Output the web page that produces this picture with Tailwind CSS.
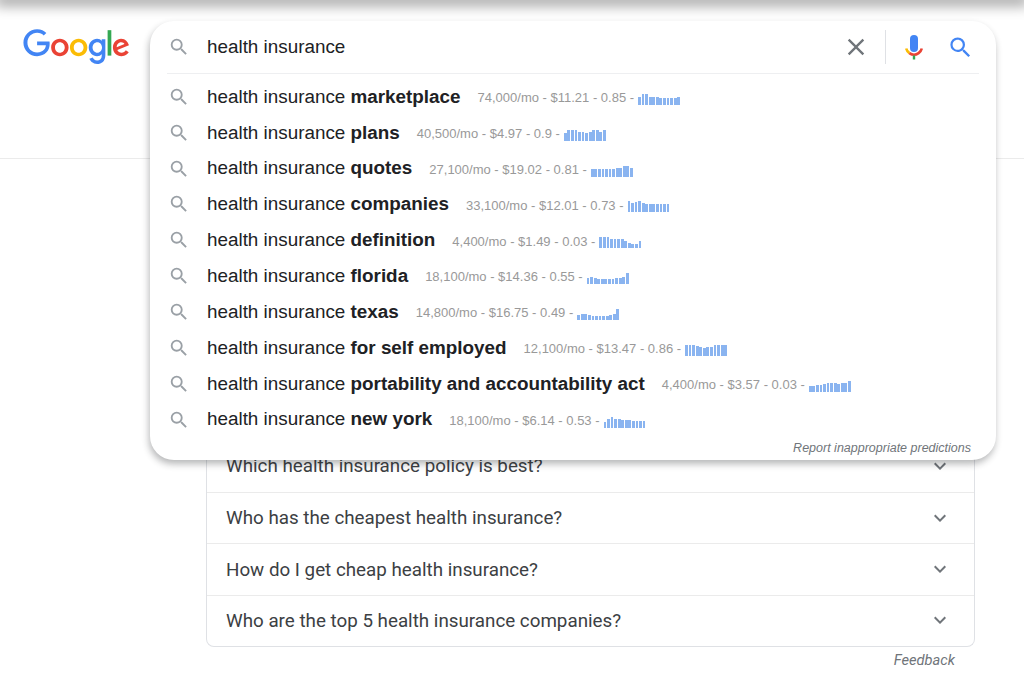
<!DOCTYPE html>
<html lang="en">
<head>
  <meta charset="UTF-8">
  <meta name="viewport" content="width=device-width, initial-scale=1.0">
  <title>health insurance - Google Search</title>
  <script src="https://cdn.jsdelivr.net/npm/@tailwindcss/browser@4"></script>
</head>
<body class="bg-white font-['Roboto',sans-serif] overflow-hidden">
  <div class="relative w-[1024px] h-[682px] overflow-hidden">
    <!-- Top shadow -->
    <div class="h-[1px] -mt-[1px] shadow-[0_0_14px_5px_rgba(0,0,0,0.42)]"></div>

    <!-- Header -->
    <header class="h-[159px] border-b border-[#ebebeb] pl-[23px] pt-[29px]">
      <svg class="w-[107px] h-[36px]" viewBox="0 0 272 92">
        <path fill="#EA4335" d="M115.75 47.18c0 12.77-9.99 22.18-22.25 22.18s-22.25-9.41-22.25-22.18C71.25 34.32 81.24 25 93.5 25s22.25 9.32 22.25 22.18zm-9.74 0c0-7.98-5.79-13.44-12.51-13.44S80.99 39.2 80.99 47.18c0 7.9 5.79 13.44 12.51 13.44s12.51-5.55 12.51-13.44z"/>
        <path fill="#FBBC05" d="M163.75 47.18c0 12.77-9.99 22.18-22.25 22.18s-22.25-9.41-22.25-22.18c0-12.85 9.99-22.18 22.25-22.18s22.25 9.32 22.25 22.18zm-9.74 0c0-7.98-5.79-13.44-12.51-13.44s-12.51 5.46-12.51 13.44c0 7.9 5.79 13.44 12.51 13.44s12.51-5.55 12.51-13.44z"/>
        <path fill="#4285F4" d="M209.75 26.34v39.82c0 16.38-9.66 23.07-21.08 23.07-10.75 0-17.22-7.19-19.66-13.07l8.48-3.53c1.51 3.61 5.21 7.87 11.17 7.87 7.31 0 11.84-4.51 11.84-13v-3.19h-.34c-2.18 2.69-6.38 5.04-11.68 5.04-11.09 0-21.25-9.66-21.25-22.09 0-12.52 10.16-22.26 21.25-22.26 5.29 0 9.49 2.35 11.68 4.96h.34v-3.61h9.25zm-8.56 20.92c0-7.81-5.21-13.52-11.84-13.52-6.72 0-12.35 5.71-12.35 13.52 0 7.73 5.63 13.36 12.35 13.36 6.63 0 11.84-5.63 11.84-13.36z"/>
        <path fill="#34A853" d="M225 3v65h-9.5V3h9.5z"/>
        <path fill="#EA4335" d="M262.02 54.48l7.56 5.04c-2.44 3.61-8.32 9.83-18.48 9.83-12.6 0-22.01-9.74-22.01-22.18 0-13.19 9.49-22.18 20.92-22.18 11.51 0 17.14 9.16 18.98 14.11l1.01 2.52-29.65 12.28c2.27 4.45 5.8 6.72 10.75 6.72 4.96 0 8.4-2.44 10.92-6.14zm-23.27-7.98l19.82-8.23c-1.09-2.77-4.37-4.7-8.23-4.7-4.95 0-11.84 4.37-11.59 12.93z"/>
        <path fill="#4285F4" d="M35.29 41.41V32H67c.31 1.64.47 3.58.47 5.68 0 7.06-1.93 15.79-8.15 22.01-6.05 6.3-13.78 9.66-24.02 9.66C16.32 69.35.36 53.89.36 34.91.36 15.93 16.32.47 35.3.47c10.5 0 17.98 4.12 23.6 9.49l-6.64 6.64c-4.03-3.78-9.49-6.72-16.97-6.72-13.86 0-24.7 11.17-24.7 25.03 0 13.86 10.84 25.03 24.7 25.03 8.99 0 14.11-3.61 17.39-6.89 2.66-2.66 4.41-6.46 5.1-11.65l-22.49.01z"/>
      </svg>
    </header>

    <!-- People also ask -->
    <main class="ml-[206px] w-[769px] mt-[282px]">
      <div class="border border-t-0 border-[#dfe1e5] rounded-b-lg text-[#3c4043] text-[18.8px]">
        <div class="h-[52px] flex items-center justify-between pb-[1px] pl-[19px] pr-[22px] border-b border-[#ebebeb]">
          <span>Which health insurance policy is best?</span>
          <svg class="w-[24px] h-[24px] text-[#70757a]" viewBox="0 0 24 24" fill="currentColor"><path d="M16.59 8.59 12 13.17 7.41 8.59 6 10l6 6 6-6z"/></svg>
        </div>
        <div class="h-[51px] flex items-center justify-between pl-[19px] pr-[22px] border-b border-[#ebebeb]">
          <span>Who has the cheapest health insurance?</span>
          <svg class="w-[24px] h-[24px] text-[#70757a]" viewBox="0 0 24 24" fill="currentColor"><path d="M16.59 8.59 12 13.17 7.41 8.59 6 10l6 6 6-6z"/></svg>
        </div>
        <div class="h-[52px] flex items-center justify-between pl-[19px] pr-[22px] border-b border-[#ebebeb]">
          <span class="mt-[1px]">How do I get cheap health insurance?</span>
          <svg class="w-[24px] h-[24px] -mt-[1px] text-[#70757a]" viewBox="0 0 24 24" fill="currentColor"><path d="M16.59 8.59 12 13.17 7.41 8.59 6 10l6 6 6-6z"/></svg>
        </div>
        <div class="h-[50px] flex items-center justify-between pl-[19px] pr-[22px]">
          <span class="mt-[1px]">Who are the top 5 health insurance companies?</span>
          <svg class="w-[24px] h-[24px] -mt-[2px] text-[#70757a]" viewBox="0 0 24 24" fill="currentColor"><path d="M16.59 8.59 12 13.17 7.41 8.59 6 10l6 6 6-6z"/></svg>
        </div>
      </div>
      <p class="mt-[2px] pr-[20px] text-right text-[14.7px] italic text-[#70757a]">Feedback</p>
    </main>

    <!-- Search box with suggestions, lies over the page -->
    <div class="absolute left-[150px] top-[21px] w-[846px] h-[439px] bg-white rounded-[24px] shadow-[-1px_4px_7px_rgba(32,33,36,0.32)] text-[#202124] font-['Liberation_Sans',sans-serif]">
      <div class="h-[52px] flex items-center pl-[18px] pr-[22px]">
        <svg class="w-[22px] h-[22px] text-[#9aa0a6] shrink-0" viewBox="0 0 24 24" fill="currentColor"><path d="M15.5 14h-.79l-.28-.27A6.471 6.471 0 0 0 16 9.5 6.5 6.5 0 1 0 9.5 16c1.61 0 3.09-.59 4.23-1.57l.27.28v.79l5 4.99L20.49 19l-4.99-5zm-6 0C7.01 14 5 11.99 5 9.5S7.01 5 9.5 5 14 7.01 14 9.5 11.99 14 9.5 14z"/></svg>
        <span class="ml-[17px] text-[18.85px] grow">health insurance</span>
        <svg class="w-[28px] h-[28px] text-[#70757a]" viewBox="0 0 24 24" fill="currentColor"><path d="M19 6.41 17.59 5 12 10.59 6.41 5 5 6.41 10.59 12 5 17.59 6.41 19 12 13.41 17.59 19 19 17.59 13.41 12z"/></svg>
        <div class="w-px h-[34px] bg-[#dfe1e5] ml-[15px] mr-[15px]"></div>
        <svg class="w-[26px] h-[26px]" viewBox="0 0 26 26" fill="none">
          <rect x="9" y="1" width="8" height="17" rx="4" fill="#4285F4"/>
          <path d="M5.2 14.5a8 8 0 0 0 3.2 4.6" stroke="#FBBC05" stroke-width="2.6"/>
          <path d="M8.4 19.1a8 8 0 0 0 9.2 0 8 8 0 0 0 3.2-4.6" stroke="#EA4335" stroke-width="2.6"/>
          <rect x="11.8" y="21.5" width="2.4" height="4" fill="#34A853"/>
        </svg>
        <svg class="w-[27px] h-[27px] ml-[20px] text-[#4285f4]" viewBox="0 0 24 24" fill="currentColor"><path d="M15.5 14h-.79l-.28-.27A6.471 6.471 0 0 0 16 9.5 6.5 6.5 0 1 0 9.5 16c1.61 0 3.09-.59 4.23-1.57l.27.28v.79l5 4.99L20.49 19l-4.99-5zm-6 0C7.01 14 5 11.99 5 9.5S7.01 5 9.5 5 14 7.01 14 9.5 11.99 14 9.5 14z"/></svg>
      </div>
      <div class="h-px mx-[17px] bg-[#eeeff1]"></div>

      <ul id="suggestions" class="mt-[5px]">
        <li class="h-[35.85px] flex items-center pl-[18px]">
          <svg class="w-[22px] h-[22px] text-[#9aa0a6] shrink-0" viewBox="0 0 24 24" fill="currentColor"><path d="M15.5 14h-.79l-.28-.27A6.471 6.471 0 0 0 16 9.5 6.5 6.5 0 1 0 9.5 16c1.61 0 3.09-.59 4.23-1.57l.27.28v.79l5 4.99L20.49 19l-4.99-5zm-6 0C7.01 14 5 11.99 5 9.5S7.01 5 9.5 5 14 7.01 14 9.5 11.99 14 9.5 14z"/></svg>
          <span class="ml-[17px] text-[18.85px]">health insurance <b class="font-bold">marketplace</b></span>
          <span class="ml-[17px] mt-[2px] text-[13px] text-[#999]">74,000/mo - $11.21 - 0.85 -</span>
          <span class="spark ml-[4px] mt-[4px]" data-bars="8 11 11 8 8 8 7 7 7 7 7 8"></span>
        </li>
        <li class="h-[35.85px] flex items-center pl-[18px]">
          <svg class="w-[22px] h-[22px] text-[#9aa0a6] shrink-0" viewBox="0 0 24 24" fill="currentColor"><path d="M15.5 14h-.79l-.28-.27A6.471 6.471 0 0 0 16 9.5 6.5 6.5 0 1 0 9.5 16c1.61 0 3.09-.59 4.23-1.57l.27.28v.79l5 4.99L20.49 19l-4.99-5zm-6 0C7.01 14 5 11.99 5 9.5S7.01 5 9.5 5 14 7.01 14 9.5 11.99 14 9.5 14z"/></svg>
          <span class="ml-[17px] text-[18.85px]">health insurance <b class="font-bold">plans</b></span>
          <span class="ml-[17px] mt-[2px] text-[13px] text-[#999]">40,500/mo - $4.97 - 0.9 -</span>
          <span class="spark ml-[4px] mt-[4px]" data-bars="8 11 11 11 9 9 8 9 11 11 9 11"></span>
        </li>
        <li class="h-[35.85px] flex items-center pl-[18px]">
          <svg class="w-[22px] h-[22px] text-[#9aa0a6] shrink-0" viewBox="0 0 24 24" fill="currentColor"><path d="M15.5 14h-.79l-.28-.27A6.471 6.471 0 0 0 16 9.5 6.5 6.5 0 1 0 9.5 16c1.61 0 3.09-.59 4.23-1.57l.27.28v.79l5 4.99L20.49 19l-4.99-5zm-6 0C7.01 14 5 11.99 5 9.5S7.01 5 9.5 5 14 7.01 14 9.5 11.99 14 9.5 14z"/></svg>
          <span class="ml-[17px] text-[18.85px]">health insurance <b class="font-bold">quotes</b></span>
          <span class="ml-[17px] mt-[2px] text-[13px] text-[#999]">27,100/mo - $19.02 - 0.81 -</span>
          <span class="spark ml-[4px] mt-[4px]" data-bars="8 8 8 8 8 8 8 9 9 11 11 9"></span>
        </li>
        <li class="h-[35.85px] flex items-center pl-[18px]">
          <svg class="w-[22px] h-[22px] text-[#9aa0a6] shrink-0" viewBox="0 0 24 24" fill="currentColor"><path d="M15.5 14h-.79l-.28-.27A6.471 6.471 0 0 0 16 9.5 6.5 6.5 0 1 0 9.5 16c1.61 0 3.09-.59 4.23-1.57l.27.28v.79l5 4.99L20.49 19l-4.99-5zm-6 0C7.01 14 5 11.99 5 9.5S7.01 5 9.5 5 14 7.01 14 9.5 11.99 14 9.5 14z"/></svg>
          <span class="ml-[17px] text-[18.85px]">health insurance <b class="font-bold">companies</b></span>
          <span class="ml-[17px] mt-[2px] text-[13px] text-[#999]">33,100/mo - $12.01 - 0.73 -</span>
          <span class="spark ml-[4px] mt-[4px]" data-bars="11 9 10 11 9 8 8 8 8 8 8 8"></span>
        </li>
        <li class="h-[35.85px] flex items-center pl-[18px]">
          <svg class="w-[22px] h-[22px] text-[#9aa0a6] shrink-0" viewBox="0 0 24 24" fill="currentColor"><path d="M15.5 14h-.79l-.28-.27A6.471 6.471 0 0 0 16 9.5 6.5 6.5 0 1 0 9.5 16c1.61 0 3.09-.59 4.23-1.57l.27.28v.79l5 4.99L20.49 19l-4.99-5zm-6 0C7.01 14 5 11.99 5 9.5S7.01 5 9.5 5 14 7.01 14 9.5 11.99 14 9.5 14z"/></svg>
          <span class="ml-[17px] text-[18.85px]">health insurance <b class="font-bold">definition</b></span>
          <span class="ml-[17px] mt-[2px] text-[13px] text-[#999]">4,400/mo - $1.49 - 0.03 -</span>
          <span class="spark ml-[4px] mt-[4px]" data-bars="11 11 11 9 9 9 9 7 5 4 4 7"></span>
        </li>
        <li class="h-[35.85px] flex items-center pl-[18px]">
          <svg class="w-[22px] h-[22px] text-[#9aa0a6] shrink-0" viewBox="0 0 24 24" fill="currentColor"><path d="M15.5 14h-.79l-.28-.27A6.471 6.471 0 0 0 16 9.5 6.5 6.5 0 1 0 9.5 16c1.61 0 3.09-.59 4.23-1.57l.27.28v.79l5 4.99L20.49 19l-4.99-5zm-6 0C7.01 14 5 11.99 5 9.5S7.01 5 9.5 5 14 7.01 14 9.5 11.99 14 9.5 14z"/></svg>
          <span class="ml-[17px] text-[18.85px]">health insurance <b class="font-bold">florida</b></span>
          <span class="ml-[17px] mt-[2px] text-[13px] text-[#999]">18,100/mo - $14.36 - 0.55 -</span>
          <span class="spark ml-[4px] mt-[4px]" data-bars="6 7 6 5 5 5 5 5 6 6 7 11"></span>
        </li>
        <li class="h-[35.85px] flex items-center pl-[18px]">
          <svg class="w-[22px] h-[22px] text-[#9aa0a6] shrink-0" viewBox="0 0 24 24" fill="currentColor"><path d="M15.5 14h-.79l-.28-.27A6.471 6.471 0 0 0 16 9.5 6.5 6.5 0 1 0 9.5 16c1.61 0 3.09-.59 4.23-1.57l.27.28v.79l5 4.99L20.49 19l-4.99-5zm-6 0C7.01 14 5 11.99 5 9.5S7.01 5 9.5 5 14 7.01 14 9.5 11.99 14 9.5 14z"/></svg>
          <span class="ml-[17px] text-[18.85px]">health insurance <b class="font-bold">texas</b></span>
          <span class="ml-[17px] mt-[2px] text-[13px] text-[#999]">14,800/mo - $16.75 - 0.49 -</span>
          <span class="spark ml-[4px] mt-[4px]" data-bars="5 6 6 5 4 4 4 4 4 5 6 11"></span>
        </li>
        <li class="h-[35.85px] flex items-center pl-[18px]">
          <svg class="w-[22px] h-[22px] text-[#9aa0a6] shrink-0" viewBox="0 0 24 24" fill="currentColor"><path d="M15.5 14h-.79l-.28-.27A6.471 6.471 0 0 0 16 9.5 6.5 6.5 0 1 0 9.5 16c1.61 0 3.09-.59 4.23-1.57l.27.28v.79l5 4.99L20.49 19l-4.99-5zm-6 0C7.01 14 5 11.99 5 9.5S7.01 5 9.5 5 14 7.01 14 9.5 11.99 14 9.5 14z"/></svg>
          <span class="ml-[17px] text-[18.85px]">health insurance <b class="font-bold">for self employed</b></span>
          <span class="ml-[17px] mt-[2px] text-[13px] text-[#999]">12,100/mo - $13.47 - 0.86 -</span>
          <span class="spark ml-[4px] mt-[4px]" data-bars="11 11 11 10 9 8 9 9 11 11 11 11"></span>
        </li>
        <li class="h-[35.85px] flex items-center pl-[18px]">
          <svg class="w-[22px] h-[22px] text-[#9aa0a6] shrink-0" viewBox="0 0 24 24" fill="currentColor"><path d="M15.5 14h-.79l-.28-.27A6.471 6.471 0 0 0 16 9.5 6.5 6.5 0 1 0 9.5 16c1.61 0 3.09-.59 4.23-1.57l.27.28v.79l5 4.99L20.49 19l-4.99-5zm-6 0C7.01 14 5 11.99 5 9.5S7.01 5 9.5 5 14 7.01 14 9.5 11.99 14 9.5 14z"/></svg>
          <span class="ml-[17px] text-[18.85px]">health insurance <b class="font-bold">portability and accountability act</b></span>
          <span class="ml-[17px] mt-[2px] text-[13px] text-[#999]">4,400/mo - $3.57 - 0.03 -</span>
          <span class="spark ml-[4px] mt-[4px]" data-bars="6 6 7 7 8 9 9 9 8 9 9 11"></span>
        </li>
        <li class="h-[35.85px] flex items-center pl-[18px]">
          <svg class="w-[22px] h-[22px] text-[#9aa0a6] shrink-0" viewBox="0 0 24 24" fill="currentColor"><path d="M15.5 14h-.79l-.28-.27A6.471 6.471 0 0 0 16 9.5 6.5 6.5 0 1 0 9.5 16c1.61 0 3.09-.59 4.23-1.57l.27.28v.79l5 4.99L20.49 19l-4.99-5zm-6 0C7.01 14 5 11.99 5 9.5S7.01 5 9.5 5 14 7.01 14 9.5 11.99 14 9.5 14z"/></svg>
          <span class="ml-[17px] text-[18.85px]">health insurance <b class="font-bold">new york</b></span>
          <span class="ml-[17px] mt-[2px] text-[13px] text-[#999]">18,100/mo - $6.14 - 0.53 -</span>
          <span class="spark ml-[4px] mt-[4px]" data-bars="6 9 11 9 9 8 8 8 7 7 7 7"></span>
        </li>
      </ul>
      <p class="absolute right-[25px] bottom-[2px] text-[12.5px] italic text-[#70757a]">Report inappropriate predictions</p>
    </div>
  </div>

  <script>
    // Trend bars for each suggestion
    document.querySelectorAll(".spark").forEach(function (el) {
      el.className += " inline-flex items-end h-[12px] w-[42px] gap-[0.8px]";
      el.dataset.bars.split(" ").forEach(function (h) {
        const bar = document.createElement("i");
        bar.className = "block grow bg-[#8ab4f0]";
        bar.style.height = h + "px";
        el.appendChild(bar);
      });
    });
  </script>
</body>
</html>
